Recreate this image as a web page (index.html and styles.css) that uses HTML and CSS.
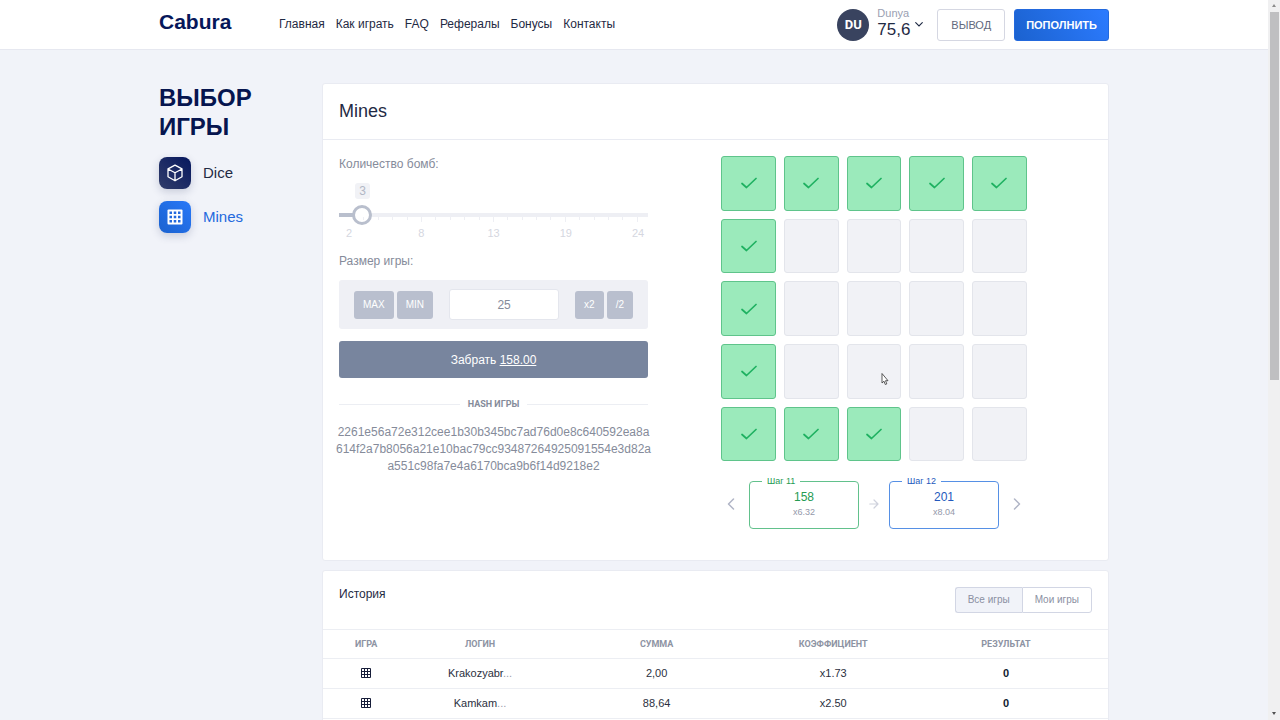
FILE: index.html
```html
<!DOCTYPE html>
<html lang="ru">
<head>
<meta charset="utf-8">
<meta name="viewport" content="width=device-width, initial-scale=1">
<title>Cabura — Mines</title>
<link rel="stylesheet" href="styles.css">
</head>
<body>
<svg class="defs" aria-hidden="true">
  <symbol id="check" viewBox="0 0 16 12"><path d="M1 6.5 5.5 10.5 15 1.5" fill="none" stroke="currentColor" stroke-width="1.7" stroke-linecap="round" stroke-linejoin="round"/></symbol>
  <symbol id="grid" viewBox="0 0 10 10"><rect width="10" height="10" rx="1" fill="currentColor"/><path d="M1 1h2v2H1zM4 1h2v2H4zM7 1h2v2H7zM1 4h2v2H1zM4 4h2v2H4zM7 4h2v2H7zM1 7h2v2H1zM4 7h2v2H4zM7 7h2v2H7z" fill="#fff"/></symbol>
</svg>
<div class="page">
  <header class="topbar">
    <div class="container topbar-inner">
      <a class="logo" href="#">Cabura</a>
      <nav class="nav">
        <a href="#">Главная</a>
        <a href="#">Как играть</a>
        <a href="#">FAQ</a>
        <a href="#">Рефералы</a>
        <a href="#">Бонусы</a>
        <a href="#">Контакты</a>
      </nav>
      <div class="user">
        <span class="avatar">DU</span>
        <div class="user-info">
          <span class="user-name">Dunya</span>
          <span class="balance">75,6</span>
        </div>
        <svg class="caret" viewBox="0 0 8 5"><path d="M.7.7 4 4 7.300.7" fill="none" stroke="currentColor" stroke-width="1.1" stroke-linecap="round"/></svg>
      </div>
      <button class="btn btn-outline" type="button">ВЫВОД</button>
      <button class="btn btn-primary" type="button">ПОПОЛНИТЬ</button>
    </div>
  </header>

  <div class="container layout">
    <aside class="sidebar">
      <h2>ВЫБОР ИГРЫ</h2>
      <a class="game" href="#">
        <span class="game-icon">
          <svg viewBox="0 0 18 18" width="18" height="18" fill="none" stroke="#fff" stroke-width="1.3" stroke-linejoin="round"><path d="M9 1.200 16 4.800V12.800L9 16.800 2 12.800V4.800zM2 5l7 3.800L16 5M9 8.800v8"/></svg>
        </span>
        Dice
      </a>
      <a class="game active" href="#">
        <span class="game-icon">
          <svg viewBox="0 0 16 16" width="16" height="16"><rect x=".5" y=".5" width="15" height="15" rx="1" fill="#fff"/><path d="M2.500 2.500h2.500V5H2.500zM6.750 2.500h2.500V5h-2.500zM11 2.500h2.500V5H11zM2.500 6.750h2.500v2.500H2.500zM6.750 6.750h2.500v2.500h-2.500zM11 6.750h2.500v2.500H11zM2.500 11h2.500v2.500H2.500zM6.750 11h2.500v2.500h-2.500zM11 11h2.500v2.500H11z" fill="#2369dd"/></svg>
        </span>
        Mines
      </a>
    </aside>

    <main class="main">
      <section class="card">
        <h1 class="card-title">Mines</h1>
        <div class="game-body">
          <form class="controls">
            <label class="label" for="bombs">Количество бомб:</label>
            <div class="slider">
              <output class="bubble" for="bombs">3</output>
              <input id="bombs" type="range" min="2" max="24" value="3">
              <div class="ticks"><i></i><i></i><i></i><i></i><i></i><i></i><i></i><i></i><i></i><i></i><i></i><i></i><i></i><i></i><i></i><i></i><i></i><i></i><i></i><i></i><i></i></div>
              <div class="scale"><span>2</span><span>8</span><span>13</span><span>19</span><span>24</span></div>
            </div>
            <label class="label" for="bet">Размер игры:</label>
            <div class="bet">
              <div class="bet-group">
                <button class="mini" type="button">MAX</button>
                <button class="mini" type="button">MIN</button>
              </div>
              <input id="bet" type="text" value="25">
              <div class="bet-group">
                <button class="mini" type="button">x2</button>
                <button class="mini" type="button">/2</button>
              </div>
            </div>
            <button class="take" type="button">Забрать <u>158.00</u></button>
            <div class="divider">HASH ИГРЫ</div>
            <p class="hash">2261e56a72e312cee1b30b345bc7ad76d0e8c640592ea8a614f2a7b8056a21e10bac79cc93487264925091554e3d82aa551c98fa7e4a6170bca9b6f14d9218e2</p>
          </form>

          <div class="field">
            <div class="tiles">
              <button class="tile open" type="button" aria-label="1"><svg><use href="#check"/></svg></button>
              <button class="tile open" type="button" aria-label="2"><svg><use href="#check"/></svg></button>
              <button class="tile open" type="button" aria-label="3"><svg><use href="#check"/></svg></button>
              <button class="tile open" type="button" aria-label="4"><svg><use href="#check"/></svg></button>
              <button class="tile open" type="button" aria-label="5"><svg><use href="#check"/></svg></button>
              <button class="tile open" type="button" aria-label="6"><svg><use href="#check"/></svg></button>
              <button class="tile" type="button" aria-label="7"></button>
              <button class="tile" type="button" aria-label="8"></button>
              <button class="tile" type="button" aria-label="9"></button>
              <button class="tile" type="button" aria-label="10"></button>
              <button class="tile open" type="button" aria-label="11"><svg><use href="#check"/></svg></button>
              <button class="tile" type="button" aria-label="12"></button>
              <button class="tile" type="button" aria-label="13"></button>
              <button class="tile" type="button" aria-label="14"></button>
              <button class="tile" type="button" aria-label="15"></button>
              <button class="tile open" type="button" aria-label="16"><svg><use href="#check"/></svg></button>
              <button class="tile" type="button" aria-label="17"></button>
              <button class="tile" type="button" aria-label="18"></button>
              <button class="tile" type="button" aria-label="19"></button>
              <button class="tile" type="button" aria-label="20"></button>
              <button class="tile open" type="button" aria-label="21"><svg><use href="#check"/></svg></button>
              <button class="tile open" type="button" aria-label="22"><svg><use href="#check"/></svg></button>
              <button class="tile open" type="button" aria-label="23"><svg><use href="#check"/></svg></button>
              <button class="tile" type="button" aria-label="24"></button>
              <button class="tile" type="button" aria-label="25"></button>
            </div>
            <div class="steps">
              <button class="step-nav" type="button" aria-label="Назад"><svg viewBox="0 0 8 12" width="8" height="12"><path d="M6.500 1 1.500 6l5 5"/></svg></button>
              <fieldset class="step current"><legend>Шаг 11</legend><strong>158</strong><small>x6.32</small></fieldset>
              <svg class="arrow" viewBox="0 0 10 10" width="10" height="10"><path d="M.8 5h8M5 1l4 4-4 4"/></svg>
              <fieldset class="step next"><legend>Шаг 12</legend><strong>201</strong><small>x8.04</small></fieldset>
              <button class="step-nav" type="button" aria-label="Вперёд"><svg viewBox="0 0 8 12" width="8" height="12"><path d="m1.500 1 5 5-5 5"/></svg></button>
            </div>
          </div>
        </div>
      </section>

      <section class="card history">
        <div class="history-head">
          <h3>История</h3>
          <div class="switch">
            <button class="selected" type="button">Все игры</button>
            <button type="button">Мои игры</button>
          </div>
        </div>
        <table>
          <colgroup><col class="c-game"><col class="c-login"><col class="c-sum"><col class="c-coef"><col class="c-result"></colgroup>
          <thead><tr><th>ИГРА</th><th>ЛОГИН</th><th>СУММА</th><th>КОЭФФИЦИЕНТ</th><th>РЕЗУЛЬТАТ</th></tr></thead>
          <tbody>
            <tr><td><svg class="row-icon"><use href="#grid"/></svg></td><td>Krakozyabr<span class="dots">...</span></td><td>2,00</td><td>x1.73</td><td><b>0</b></td></tr>
            <tr><td><svg class="row-icon"><use href="#grid"/></svg></td><td>Kamkam<span class="dots">...</span></td><td>88,64</td><td>x2.50</td><td><b>0</b></td></tr>
            <tr><td><svg class="row-icon"><use href="#grid"/></svg></td><td></td><td></td><td></td><td></td></tr>
          </tbody>
        </table>
      </section>
    </main>
  </div>
</div>
<div class="scrollbar"><i class="up"></i><i class="thumb"></i><i class="down"></i></div>
<svg class="cursor" viewBox="0 0 8 13"><path d="M1 1v9.500L3 8.700l1.300 3.300 1.500-.6L4.500 8.200H7z" fill="#fff" stroke="#333" stroke-width=".8"/></svg>
</body>
</html>
```

FILE: styles.css
```css
* { box-sizing: border-box; }

body {
  margin: 0;
  height: 100vh;
  overflow: hidden;
  display: flex;
  position: relative;
  background: #f1f3f9;
  color: #1f2a44;
  font: 12px/16px "Liberation Sans", Arial, sans-serif;
}

a { color: inherit; text-decoration: none; }
button, input { font: inherit; color: inherit; }
h1, h2, h3, p { margin: 0; }

.defs { position: absolute; width: 0; height: 0; }
.page { flex: 1; min-width: 0; }

.container {
  width: 100%;
  max-width: 950px;
  margin: 0 auto;
}

/* Top bar */
.topbar { background: #fff; border-bottom: 1px solid #e6e8f0; }
.topbar-inner { display: flex; align-items: center; height: 49px; }

.logo {
  width: 120px;
  padding-bottom: 6px;
  font-size: 21px;
  line-height: 24px;
  font-weight: bold;
  color: #06175a;
}

.nav { display: flex; gap: 11px; flex: 1; padding-bottom: 2px; }
.user { display: flex; align-items: center; margin-right: 14px; }

.avatar {
  display: grid;
  place-items: center;
  width: 32px;
  height: 32px;
  margin-right: 8px;
  border-radius: 50%;
  background: #39435f;
  color: #fff;
  font: bold 13px/16px Roboto, sans-serif;
}

.user-info { display: flex; flex-direction: column; width: 38px; padding-bottom: 2px; }
.user-name { font-size: 11px; line-height: 12px; color: #9aa0b2; }
.balance { font-size: 17px; line-height: 22px; }
.caret { width: 8px; height: 5px; }

.btn {
  height: 32px;
  border-radius: 3px;
  font: bold 11px/16px "Liberation Sans", Arial, sans-serif;
}
.btn-outline {
  margin-right: 9px;
  padding: 0 13px;
  border: 1px solid #d5d7e2;
  background: #fff;
  color: #62687d;
  font-weight: normal;
}
.btn-primary {
  padding: 0 11px;
  border: 1px solid #2369dd;
  background: linear-gradient(60deg, #1b62cf, #2c7bff);
  color: #fff;
}

/* Layout */
.layout { display: flex; align-items: flex-start; padding-top: 33px; }
.sidebar { flex: 0 0 163px; display: flex; flex-direction: column; gap: 12px; }
.sidebar h2 {
  width: 100px;
  padding-bottom: 4px;
  font-size: 24px;
  line-height: 29px;
  color: #06154f;
}

.game { display: flex; align-items: center; gap: 12px; font-size: 15px; }
.game-icon {
  display: grid;
  place-items: center;
  width: 32px;
  height: 32px;
  border-radius: 8px;
  background: linear-gradient(45deg, #323e6b, #06175e);
  box-shadow: 0 3px 8px rgba(40, 50, 100, .2);
}
.active { color: #2369dd; }
.active .game-icon { background: linear-gradient(45deg, #1b62cf, #2878f8); }

.main { flex: 1; min-width: 0; display: flex; flex-direction: column; gap: 9px; }

.card {
  background: #fff;
  border: 1px solid #e9ebf2;
  border-radius: 3px;
}
.card-title {
  padding: 16px;
  border-bottom: 1px solid #e9ebf2;
  font-size: 18px;
  line-height: 23px;
  font-weight: normal;
}

.game-body {
  display: grid;
  grid-template-columns: minmax(0, 309fr) minmax(0, 436fr);
  gap: 8px;
  padding: 16px 16px 31px;
}

/* Controls */
.controls { display: flex; flex-direction: column; color: #858b9a; }

.slider { display: grid; padding: 11px 0 12px; }
.bubble {
  justify-self: start;
  width: 15px;
  margin-left: 16px;
  border-radius: 3px;
  background: #f1f2f6;
  color: #b2b7c5;
  text-align: center;
}
.slider input {
  -webkit-appearance: none;
  appearance: none;
  width: 100%;
  height: 20px;
  margin: 6px 0 0;
  background: linear-gradient(90deg, #b9bfcd 5%, #eeeff4 5%) center / 100% 4px no-repeat;
}
.slider input::-webkit-slider-thumb {
  -webkit-appearance: none;
  width: 20px;
  height: 20px;
  border: 3px solid #b9bfcd;
  border-radius: 50%;
  background: #fff;
}
.ticks {
  display: flex;
  justify-content: space-between;
  height: 5px;
  margin: -8px 10px 3px;
}
.ticks i { width: 1px; height: 3px; background: #eeeff4; }
.ticks i:nth-child(5n + 1) { height: 5px; }
.ticks i:first-child { visibility: hidden; }
.scale { display: flex; justify-content: space-between; color: #d5d7df; font-size: 11px; }
.scale span { width: 20px; text-align: center; }

.bet {
  display: flex;
  align-items: center;
  gap: 16px;
  margin-top: 11px;
  padding: 9px 15px;
  border-radius: 3px;
  background: #eff0f5;
}
.bet-group { display: flex; gap: 3px; }
.mini {
  height: 28px;
  padding: 0 9px;
  border: 0;
  border-radius: 3px;
  background: #b9bfce;
  color: #fff;
  font-size: 10px;
}
.bet input {
  flex: 1;
  min-width: 0;
  height: 31px;
  padding: 0;
  border: 1px solid #e4e6ed;
  border-radius: 3px;
  background: #fff;
  text-align: center;
}

.take {
  height: 37px;
  margin-top: 12px;
  border: 0;
  border-radius: 3px;
  background: #78859e;
  color: #fff;
}

.divider {
  display: flex;
  align-items: center;
  gap: 8px;
  margin: 18px 0 12px;
  font: bold 9px/16px Roboto, sans-serif;
}
.divider::before, .divider::after { content: ""; flex: 1; height: 1px; background: #eceef3; }

.hash {
  margin: 0 -3px;
  line-height: 17px;
  text-align: center;
  word-break: break-all;
}

/* Mine field */
.field { display: flex; flex-direction: column; align-items: center; gap: 14px; }
.tiles { display: grid; grid-template-columns: repeat(5, 1fr); gap: 8px; width: 70%; }
.tile {
  display: grid;
  place-items: center;
  aspect-ratio: 1;
  padding: 0;
  border: 1px solid #e3e5eb;
  border-radius: 3px;
  background: #f1f2f6;
}
.tile svg { width: 16px; height: 12px; }
.open { border-color: #5fc48b; background: #9beabb; color: #1fb161; }

.steps { display: flex; align-items: center; justify-content: center; gap: 14px; }
.steps svg { display: block; fill: none; stroke: #b0b5c6; stroke-width: 1.5; stroke-linecap: round; stroke-linejoin: round; }
.steps .arrow { stroke: #ced1dc; stroke-width: 1.2; margin: 4px -4px 0; }
.step-nav { padding: 0; margin-top: 3px; border: 0; background: none; }
.step {
  width: 110px;
  margin: 0;
  padding: 2px 0 8px;
  border: 1px solid;
  border-radius: 4px;
  text-align: center;
}
.step legend { margin: 0 auto 0 12px; padding: 0 5px; font-size: 9px; line-height: 12px; }
.step strong, .step small { display: block; font-weight: normal; }
.step strong { font-size: 12px; line-height: 16px; }
.step small { font-size: 9px; line-height: 15px; color: #9498aa; }
.current { border-color: #62c18c; color: #269b52; }
.next { border-color: #5690e5; color: #2459bd; }

/* History */
.history-head {
  display: flex;
  justify-content: space-between;
  align-items: flex-start;
  padding: 16px;
  border-bottom: 1px solid #eceef3;
}
.history-head h3 { font-size: 12px; line-height: 14px; font-weight: normal; }
.switch { display: flex; }
.switch button {
  height: 26px;
  padding: 0 12px;
  border: 1px solid #d2d6e4;
  background: #fff;
  color: #8b90a2;
  font-size: 10px;
}
.switch button:first-child { border-radius: 3px 0 0 3px; border-right: 0; }
.switch button:last-child { border-radius: 0 3px 3px 0; }
.switch .selected { background: #f1f3f9; }

table { width: 100%; table-layout: fixed; border-collapse: collapse; }
.c-game { width: 11%; }
.c-login { width: 18%; }
.c-sum { width: 27%; }
.c-coef { width: 18%; }
.c-result { width: 26%; }
th, td { padding: 0; border-bottom: 1px solid #eceef3; text-align: center; }
th { height: 28px; font: bold 9px/16px Roboto, sans-serif; color: #8d93a3; }
td { height: 30px; font-size: 11px; color: #2b3040; }
td b { color: #111a30; }
.dots { color: #9a9eac; }
.row-icon { display: block; width: 10px; height: 10px; margin: 0 auto; color: #161c38; }

/* Window scrollbar and pointer */
.scrollbar {
  flex: 0 0 12px;
  display: flex;
  flex-direction: column;
  align-items: center;
  background: #f0f0f1;
}
.scrollbar .thumb { width: 9px; height: 368px; background: #bfbfc1; }
.up, .down { border: 2px solid transparent; }
.up { margin: 2px 0 5px; border-bottom: 3px solid #8b8b8b; }
.down { margin: auto 0 3px; border-top: 3px solid #505050; }
.cursor { position: absolute; left: 881px; top: 372px; width: 8px; height: 14px; }
```
